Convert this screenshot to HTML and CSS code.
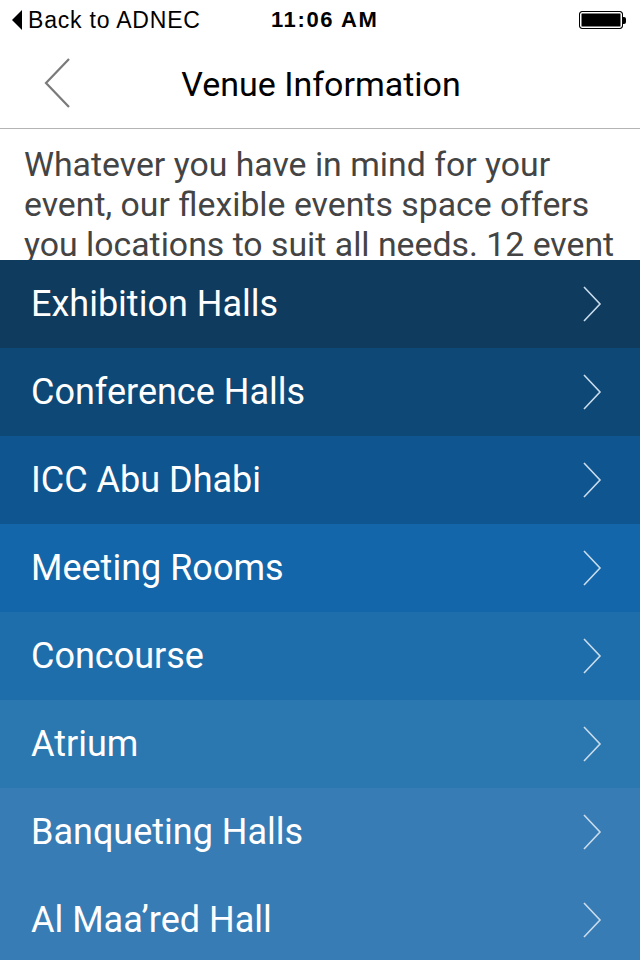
FILE: index.html
```html
<!DOCTYPE html>
<html lang="en">

<head>
  <meta charset="UTF-8" />
  <meta name="viewport" content="width=device-width, initial-scale=1.0" />
  <title>Venue Information</title>
  <link rel="stylesheet" href="styles.css">
</head>

<body>
  <div class="screen">
    <div class="status">
      <div class="status-back"><i class="tri"></i>Back to ADNEC</div>
      <div class="status-time">11:06 AM</div>
      <div class="battery"><span class="cell"></span><span class="nub"></span></div>
    </div>

    <div class="navbar">
      <svg class="nav-back" width="30" height="52" viewBox="0 0 30 52">
        <polyline points="27,2 4,26 27,50" fill="none" stroke="#7a7a7a" stroke-width="2.2" />
      </svg>
      <h1 class="nav-title">Venue Information</h1>
    </div>

    <div class="intro">
      <p>Whatever you have in mind for your event, our flexible events space offers you locations to suit all needs. 12 event halls, conference halls, meeting rooms and outdoor spaces are available for your event.</p>
    </div>

    <ul class="venues">
      <li class="v1">Exhibition Halls<svg class="chev" width="20" height="36" viewBox="0 0 20 36"><polyline points="2,1 18,18 2,35" /></svg></li>
      <li class="v2">Conference Halls<svg class="chev" width="20" height="36" viewBox="0 0 20 36"><polyline points="2,1 18,18 2,35" /></svg></li>
      <li class="v3">ICC Abu Dhabi<svg class="chev" width="20" height="36" viewBox="0 0 20 36"><polyline points="2,1 18,18 2,35" /></svg></li>
      <li class="v4">Meeting Rooms<svg class="chev" width="20" height="36" viewBox="0 0 20 36"><polyline points="2,1 18,18 2,35" /></svg></li>
      <li class="v5">Concourse<svg class="chev" width="20" height="36" viewBox="0 0 20 36"><polyline points="2,1 18,18 2,35" /></svg></li>
      <li class="v6">Atrium<svg class="chev" width="20" height="36" viewBox="0 0 20 36"><polyline points="2,1 18,18 2,35" /></svg></li>
      <li class="v7">Banqueting Halls<svg class="chev" width="20" height="36" viewBox="0 0 20 36"><polyline points="2,1 18,18 2,35" /></svg></li>
      <li class="v8">Al Maa’red Hall<svg class="chev" width="20" height="36" viewBox="0 0 20 36"><polyline points="2,1 18,18 2,35" /></svg></li>
    </ul>
  </div>
</body>

</html>
```

FILE: styles.css
```css
* {
  box-sizing: border-box;
}

body {
  margin: 0;
  background: #fff;
  font-family: Roboto, "Noto Sans", sans-serif;
}

.screen {
  width: 640px;
  height: 960px;
  overflow: hidden;
}

/* status bar */
.status {
  height: 40px;
  display: flex;
  align-items: center;
  padding: 0 12px;
  font-family: "Liberation Sans", Arial, sans-serif;
  color: #000;
}

.status-back {
  width: 259px;
  font-size: 23px;
  letter-spacing: 0.8px;
  display: flex;
  align-items: center;
}

.status-back .tri {
  width: 0;
  height: 0;
  border-top: 10px solid transparent;
  border-bottom: 10px solid transparent;
  border-right: 10px solid #000;
  margin-right: 6px;
}

.status-time {
  flex: 1;
  font-size: 22px;
  font-weight: bold;
  letter-spacing: 1.6px;
}

.battery {
  display: flex;
  align-items: center;
  margin-right: 2px;
}

.battery .cell {
  width: 44px;
  height: 18px;
  border: 1.5px solid #000;
  border-radius: 3px;
  background: #000;
  box-shadow: inset 0 0 0 1.5px #fff;
}

.battery .nub {
  width: 3px;
  height: 7px;
  background: #000;
  border-radius: 0 2px 2px 0;
}

/* nav bar */
.navbar {
  height: 89px;
  display: flex;
  align-items: center;
  justify-content: center;
  position: relative;
  border-bottom: 1px solid #b4b4b4;
}

.nav-back {
  position: absolute;
  left: 42px;
  top: 17px;
}

.nav-title {
  margin: 0 0 0 2px;
  font-size: 34px;
  font-weight: normal;
  color: #000;
}

/* intro text */
.intro {
  height: 131px;
  overflow: hidden;
  padding: 16px 24px 0;
}

.intro p {
  margin: 0;
  font-size: 33.8px;
  line-height: 40px;
  color: #444;
}

/* venue list */
.venues {
  list-style: none;
  margin: 0;
  padding: 0;
}

.venues li {
  height: 88px;
  display: flex;
  align-items: center;
  justify-content: space-between;
  padding: 0 38px 0 31px;
  font-size: 36px;
  color: #fff;
}

.chev polyline {
  fill: none;
  stroke: #c9dcec;
  stroke-width: 1.6;
}

.v1 { background: #0f3b5e; }
.v2 { background: #0e4876; }
.v3 { background: #0f5690; }
.v4 { background: #1266a9; }
.v5 { background: #1e6eac; }
.v6 { background: #2b77b0; }
.v7,
.v8 { background: #377cb5; }
```
